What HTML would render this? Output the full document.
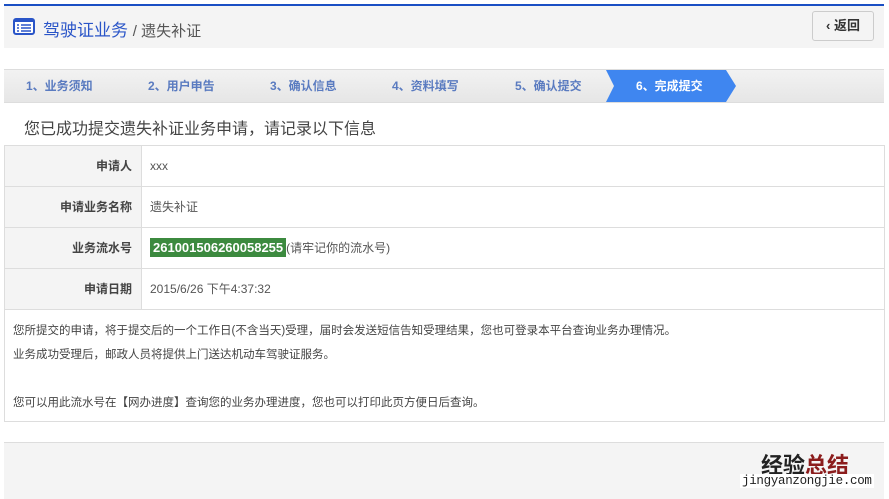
<!DOCTYPE html>
<html><head><meta charset="utf-8"><style>
body{margin:0;width:889px;height:498px;background:#fff;font-family:"Liberation Sans","Noto Sans CJK SC",sans-serif;position:relative;overflow:hidden;color:#333}
.abs{position:absolute}
.hdr{left:4px;top:4px;width:880px;height:42px;background:#f4f4f4;border-top:2px solid #1a4fc4}
.steps{left:4px;top:69px;width:880px;height:32px;background:linear-gradient(#f2f2f2,#e6e6e6);border-top:1px solid #ddd;border-bottom:1px solid #ddd}
.st{position:absolute;top:0;height:32px;line-height:32px;font-size:12px;font-weight:bold;color:#5a7bc0}
.tbl{left:4px;top:145px;width:879px;border:1px solid #ddd;border-bottom:none}
.row{height:40px;border-bottom:1px solid #ddd;display:flex;font-size:12px}
.lab{width:137px;background:#f4f4f4;border-right:1px solid #ddd;text-align:right;padding-right:9px;box-sizing:border-box;line-height:40px;font-weight:bold;color:#444}
.val{line-height:40px;padding-left:8px;color:#555}
</style></head><body>
<div class="abs hdr">
 <svg class="abs" style="left:9px;top:12px" width="22" height="17" viewBox="0 0 22 17"><rect x="1" y="1" width="20" height="15" rx="2" fill="#fff" stroke="#2a55c8" stroke-width="2"/><rect x="1" y="1" width="20" height="3" fill="#2a55c8"/><path d="M4 7h2M8 7h10M4 10h2M8 10h10M4 13h2M8 13h10" stroke="#2a55c8" stroke-width="1.5"/></svg>
 <div class="abs" style="left:39px;top:10px;font-size:17px;color:#2a55c8">驾驶证业务 <span style="color:#555;font-size:15px">/ 遗失补证</span></div>
 <div class="abs" style="left:808px;top:5px;width:60px;height:28px;border:1px solid #ccc;border-radius:3px;background:#f4f4f4;font-size:13px;font-weight:bold;line-height:28px;text-align:center;color:#333">‹ 返回</div>
</div>
<div class="abs steps">
 <div class="st" style="left:22px">1、业务须知</div>
 <div class="st" style="left:144px">2、用户申告</div>
 <div class="st" style="left:266px">3、确认信息</div>
 <div class="st" style="left:388px">4、资料填写</div>
 <div class="st" style="left:511px">5、确认提交</div>
 <svg class="abs" style="left:602px;top:0" width="130" height="32"><polygon points="0,0 120,0 130,16 120,32 0,32 8,16" fill="#3f86f0"/></svg>
 <div class="st" style="left:632px;color:#fff">6、完成提交</div>
</div>
<div class="abs" style="left:24px;top:115px;font-size:16px;color:#444">您已成功提交遗失补证业务申请，请记录以下信息</div>
<div class="abs tbl">
 <div class="row"><div class="lab">申请人</div><div class="val">xxx</div></div>
 <div class="row"><div class="lab">申请业务名称</div><div class="val">遗失补证</div></div>
 <div class="row"><div class="lab">业务流水号</div><div class="val"><span style="background:#3c8a3f;color:#fff;font-weight:bold;font-size:13px;padding:2px 3px">261001506260058255</span>(请牢记你的流水号)</div></div>
 <div class="row"><div class="lab">申请日期</div><div class="val">2015/6/26 下午4:37:32</div></div>
 <div style="height:112px;border-bottom:1px solid #ddd;font-size:11.5px;color:#444;padding:9px 0 0 8px;box-sizing:border-box;line-height:24px">您所提交的申请，将于提交后的一个工作日(不含当天)受理，届时会发送短信告知受理结果，您也可登录本平台查询业务办理情况。<br>业务成功受理后，邮政人员将提供上门送达机动车驾驶证服务。<br><br>您可以用此流水号在【网办进度】查询您的业务办理进度，您也可以打印此页方便日后查询。</div>
</div>
<div class="abs" style="left:4px;top:442px;width:880px;height:56px;background:#f4f4f4;border-top:1px solid #ddd"></div>
<div class="abs" style="left:761px;top:448px;font-size:22px;font-weight:bold;color:#222">经验<span style="color:#8b1c1c">总结</span></div>
<div class="abs" style="left:740px;top:474px;font-size:12.5px;color:#222;background:#fff;padding:0 2px;font-family:'Liberation Mono',monospace;letter-spacing:-0.3px">jingyanzongjie.com</div>
</body></html>
